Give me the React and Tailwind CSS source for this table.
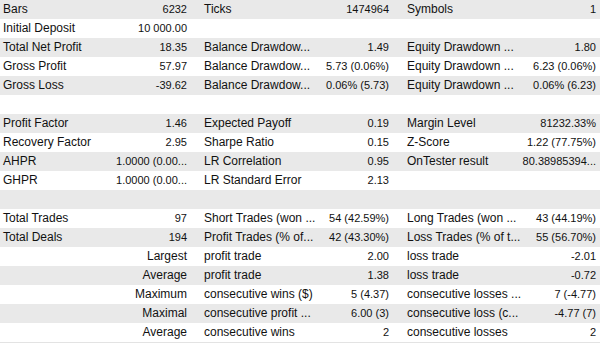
import React from "react";

const rows = [
  ["Bars", "6232", "Ticks", "1474964", "Symbols", "1"],
  ["Initial Deposit", "10 000.00", "", "", "", ""],
  ["Total Net Profit", "18.35", "Balance Drawdow...", "1.49", "Equity Drawdown ...", "1.80"],
  ["Gross Profit", "57.97", "Balance Drawdow...", "5.73 (0.06%)", "Equity Drawdown ...", "6.23 (0.06%)"],
  ["Gross Loss", "-39.62", "Balance Drawdow...", "0.06% (5.73)", "Equity Drawdown ...", "0.06% (6.23)"],
  ["", "", "", "", "", ""],
  ["Profit Factor", "1.46", "Expected Payoff", "0.19", "Margin Level", "81232.33%"],
  ["Recovery Factor", "2.95", "Sharpe Ratio", "0.15", "Z-Score", "1.22 (77.75%)"],
  ["AHPR", "1.0000 (0.00...", "LR Correlation", "0.95", "OnTester result", "80.38985394..."],
  ["GHPR", "1.0000 (0.00...", "LR Standard Error", "2.13", "", ""],
  ["", "", "", "", "", ""],
  ["Total Trades", "97", "Short Trades (won ...", "54 (42.59%)", "Long Trades (won ...", "43 (44.19%)"],
  ["Total Deals", "194", "Profit Trades (% of...", "42 (43.30%)", "Loss Trades (% of t...", "55 (56.70%)"],
  ["", "Largest", "profit trade", "2.00", "loss trade", "-2.01"],
  ["", "Average", "profit trade", "1.38", "loss trade", "-0.72"],
  ["", "Maximum", "consecutive wins ($)", "5 (4.37)", "consecutive losses ...", "7 (-4.77)"],
  ["", "Maximal", "consecutive profit ...", "6.00 (3)", "consecutive loss (c...", "-4.77 (7)"],
  ["", "Average", "consecutive wins", "2", "consecutive losses", "2"],
];

function Val({ v, cls }) {
  const word = /^[A-Za-z]/.test(v);
  return (
    <div className={`${cls} text-right whitespace-nowrap ${word ? "text-[12px]" : "text-[11px]"}`}>
      {v}
    </div>
  );
}

export default function App() {
  return (
    <div
      className="w-[600px] h-[343px] bg-white text-[#111] text-[12px] leading-[19px] overflow-hidden border-b border-[#e3e3e3]"
      style={{ fontFamily: '"Liberation Sans", Arial, sans-serif' }}
    >
      {rows.map((r, i) => (
        <div
          key={i}
          className={`grid grid-cols-[113px_77px_123px_79px_128px_80px] h-[19px] ${
            i % 2 === 0 ? "bg-[#e9e9e9]" : "bg-white"
          }`}
        >
          <div className="pl-[3px] whitespace-nowrap">{r[0]}</div>
          <Val v={r[1]} cls="pr-[3px]" />
          <div className="pl-[14px] whitespace-nowrap">{r[2]}</div>
          <Val v={r[3]} cls="pr-[3px]" />
          <div className="pl-[15px] whitespace-nowrap">{r[4]}</div>
          <Val v={r[5]} cls="pr-[4px]" />
        </div>
      ))}
    </div>
  );
}
